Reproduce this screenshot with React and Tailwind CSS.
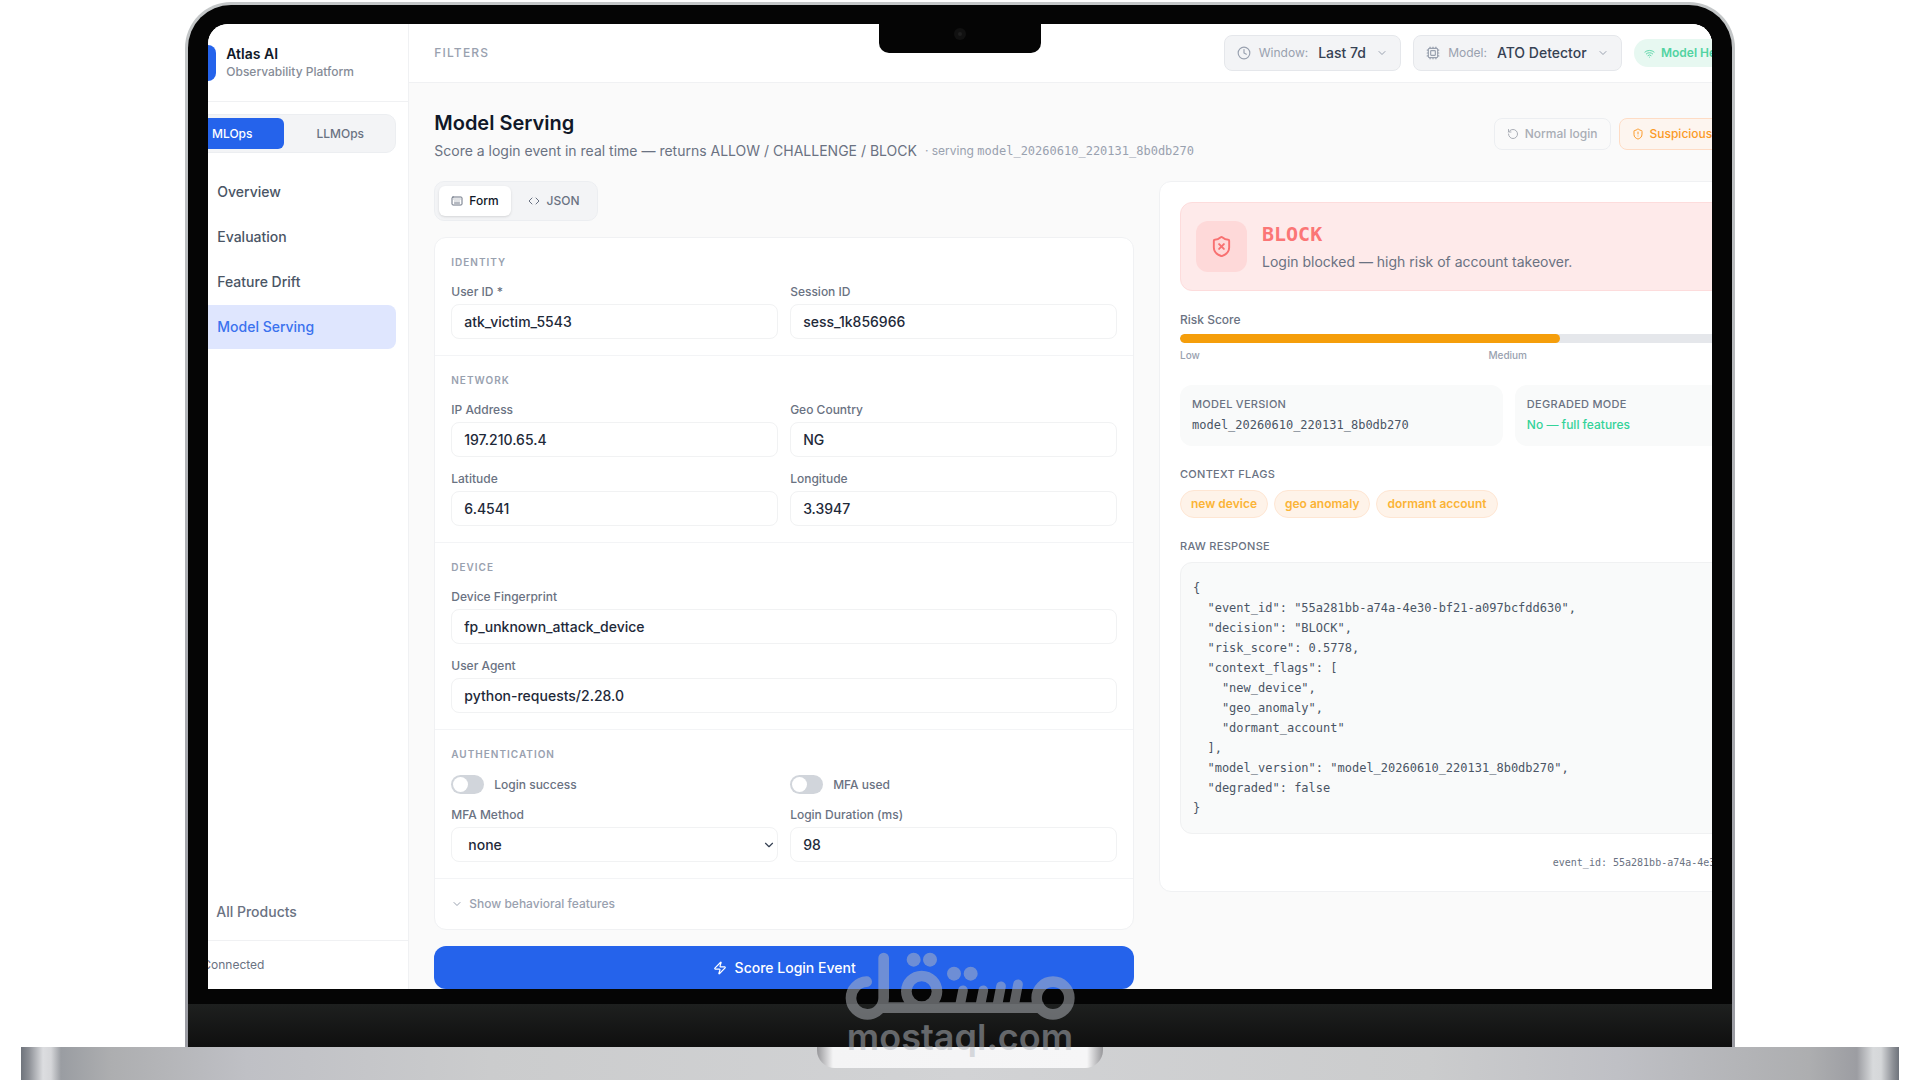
import { useState } from 'react';
import {
  ChevronDown,
  CircuitBoard,
  Clock,
  Code,
  Cpu,
  Gauge,
  Grid2x2,
  Keyboard,
  LayoutDashboard,
  LineChart,
  RotateCcw,
  Server,
  ShieldAlert,
  ShieldX,
  Wifi,
  Zap,
} from 'lucide-react';

const navItems = [
  { label: 'Overview', Icon: LayoutDashboard },
  { label: 'Evaluation', Icon: Gauge },
  { label: 'Feature Drift', Icon: LineChart },
  { label: 'Model Serving', Icon: Server, active: true },
];

const rawResponse = {
  event_id: '55a281bb-a74a-4e30-bf21-a097bcfdd630',
  decision: 'BLOCK',
  risk_score: 0.5778,
  context_flags: ['new_device', 'geo_anomaly', 'dormant_account'],
  model_version: 'model_20260610_220131_8b0db270',
  degraded: false,
};

const mono = "font-['DejaVu_Sans_Mono',monospace]";

function Sidebar() {
  return (
    <aside className="flex w-[245px] shrink-0 flex-col border-r border-[#f0f1f3] bg-white">
      <div className="flex h-[78px] items-center gap-[10px] border-b border-[#f0f1f3] px-4">
        <div className="flex size-9 items-center justify-center rounded-lg bg-[#2563eb] text-white">
          <CircuitBoard size={18} />
        </div>
        <div>
          <div className="text-sm font-semibold leading-[18px] text-gray-900">Atlas AI</div>
          <div className="text-xs font-medium leading-[18px] text-[#868c97]">Observability Platform</div>
        </div>
      </div>
      <div className="mx-3 mt-3 grid grid-cols-2 gap-1 rounded-[10px] border border-[#eceef1] bg-[#f3f4f6] p-[3px]">
        <button type="button" className="h-[31px] rounded-md bg-[#2563eb] text-xs font-medium text-white">
          MLOps
        </button>
        <button type="button" className="h-[31px] rounded-md text-xs font-medium text-gray-500">
          LLMOps
        </button>
      </div>
      <nav className="mx-3 mt-[17px] flex flex-col gap-px">
        {navItems.map(({ label, Icon, active }) => (
          <a
            key={label}
            href="#"
            className={
              active
                ? 'flex h-11 items-center gap-3 rounded-lg bg-[#dfe6fe] px-3 text-sm font-medium text-[#3b72ee]'
                : 'flex h-11 items-center gap-3 rounded-lg px-3 text-sm font-medium text-gray-600'
            }
          >
            <Icon size={17} />
            {label}
          </a>
        ))}
      </nav>
      <a href="#" className="mx-3 mt-auto mb-1.5 flex h-11 items-center gap-3 px-3 text-sm font-medium text-gray-500">
        <Grid2x2 size={16} />
        All Products
      </a>
      <div className="flex h-[49px] items-center gap-[10px] border-t border-[#f0f1f3] px-5 text-xs text-gray-500">
        <span className="size-2 rounded-full bg-emerald-500" />
        Connected
      </div>
    </aside>
  );
}

function FilterSelect({ id, label, value, Icon }) {
  return (
    <div className="flex h-9 items-center rounded-lg border border-[#e5e7eb] bg-[#f3f4f6] px-3">
      <Icon size={14} className="mr-2 text-gray-400" />
      <label htmlFor={id} className="mr-[10px] text-xs text-gray-400">
        {label}
      </label>
      <select id={id} className="appearance-none bg-transparent text-sm font-medium text-gray-700">
        <option>{value}</option>
      </select>
      <ChevronDown size={12} className="ml-2.5 text-gray-400" />
    </div>
  );
}

function TopBar() {
  return (
    <header className="flex h-[59px] shrink-0 items-center justify-between border-b border-[#f0f1f3] bg-white pr-6 pl-[25px]">
      <span className="text-xs font-medium tracking-widest text-gray-400">FILTERS</span>
      <div className="flex w-[635px] items-center gap-3">
        <FilterSelect id="window" label="Window:" value="Last 7d" Icon={Clock} />
        <FilterSelect id="model" label="Model:" value="ATO Detector" Icon={Cpu} />
        <span className="flex h-7 items-center gap-1.5 rounded-full bg-[#e7f8f1] px-[10px] text-xs font-semibold text-[#52d3a2]">
          <Wifi size={11} />
          Model Healthy
        </span>
      </div>
    </header>
  );
}

function Field({ id, label, value, full }) {
  return (
    <div className={full ? 'col-span-2' : ''}>
      <label htmlFor={id} className="mb-1 block text-xs font-medium leading-4 text-gray-500">
        {label}
      </label>
      <input
        id={id}
        defaultValue={value}
        className="block h-[35px] w-full rounded-lg border border-[#f1f2f3] bg-white px-3 text-sm font-medium text-gray-800 outline-none"
      />
    </div>
  );
}

function Toggle({ id, label }) {
  const [on, setOn] = useState(false);
  return (
    <label htmlFor={id} className="flex h-[17px] items-center gap-[10px] text-xs font-medium text-gray-500">
      <input id={id} type="checkbox" role="switch" checked={on} onChange={() => setOn(!on)} className="peer sr-only" />
      <span className="flex h-[19px] w-[33px] items-center rounded-full bg-[#d1d5db] px-0.5 peer-checked:justify-end peer-checked:bg-[#2563eb]">
        <span className="size-[15px] rounded-full bg-white" />
      </span>
      {label}
    </label>
  );
}

function Section({ title, children }) {
  return (
    <fieldset className="border-b border-[#f3f4f6] p-4">
      <legend className="float-left mb-3.5 text-[10px] font-semibold leading-4 tracking-widest text-gray-400">
        {title}
      </legend>
      <div className="clear-both grid grid-cols-2 gap-x-3 gap-y-3.5">{children}</div>
    </fieldset>
  );
}

function EventForm() {
  return (
    <div className="flex flex-col">
      <div className="mb-4 flex h-10 gap-1 self-start rounded-[10px] border border-[#eceef1] bg-[#f3f4f6] p-1 text-xs font-medium">
        <button type="button" className="flex items-center gap-1.5 rounded-md bg-white px-3 text-gray-900 shadow-sm">
          <Keyboard size={12} className="text-gray-500" />
          Form
        </button>
        <button type="button" className="flex items-center gap-[7px] rounded-md px-[13px] text-gray-500">
          <Code size={12} />
          JSON
        </button>
      </div>
      <form onSubmit={(e) => e.preventDefault()}>
        <div className="rounded-xl border border-[#f0f1f3] bg-white">
          <Section title="IDENTITY">
            <Field id="user" label="User ID *" value="atk_victim_5543" />
            <Field id="session" label="Session ID" value="sess_1k856966" />
          </Section>
          <Section title="NETWORK">
            <Field id="ip" label="IP Address" value="197.210.65.4" />
            <Field id="geo" label="Geo Country" value="NG" />
            <Field id="lat" label="Latitude" value="6.4541" />
            <Field id="lng" label="Longitude" value="3.3947" />
          </Section>
          <Section title="DEVICE">
            <Field id="fingerprint" label="Device Fingerprint" value="fp_unknown_attack_device" full />
            <Field id="agent" label="User Agent" value="python-requests/2.28.0" full />
          </Section>
          <Section title="AUTHENTICATION">
            <Toggle id="login-success" label="Login success" />
            <Toggle id="mfa-used" label="MFA used" />
            <div>
              <label htmlFor="mfa" className="mb-1 block text-xs font-medium leading-4 text-gray-500">
                MFA Method
              </label>
              <div className="grid">
                <select
                  id="mfa"
                  className="col-start-1 row-start-1 h-[35px] w-full appearance-none rounded-lg border border-[#f1f2f3] bg-white px-4 text-sm font-medium text-gray-800"
                >
                  <option>none</option>
                </select>
                <ChevronDown
                  size={14}
                  className="pointer-events-none col-start-1 row-start-1 mr-0.5 self-center justify-self-end text-gray-700"
                />
              </div>
            </div>
            <Field id="duration" label="Login Duration (ms)" value="98" />
          </Section>
          <button type="button" className="mx-4 my-[17px] flex h-4 items-center gap-1.5 text-xs font-medium text-gray-400">
            <ChevronDown size={12} />
            Show behavioral features
          </button>
        </div>
        <button
          type="submit"
          className="mt-4 flex h-[43px] w-full items-center justify-center gap-2 rounded-xl bg-[#2563eb] text-sm font-medium text-white"
        >
          <Zap size={14} />
          Score Login Event
        </button>
      </form>
    </div>
  );
}

function SmallHeading({ children }) {
  return <h3 className="text-[11px] font-medium leading-[15px] tracking-wide text-gray-500">{children}</h3>;
}

function ResultPanel() {
  return (
    <section className="flex flex-col gap-[21px] self-start rounded-xl border border-[#f0f1f3] bg-white p-5">
      <div className="flex h-[89px] items-center gap-[15px] rounded-xl border border-[#fddcdc] bg-[#feeaea] px-[15px]">
        <div className="flex size-[51px] items-center justify-center rounded-xl bg-[#fed9d9] text-[#f87171]">
          <ShieldX size={23} />
        </div>
        <div className="pt-0.5">
          <div className={`${mono} text-xl font-bold leading-7 text-[#fb7676]`}>BLOCK</div>
          <div className="text-sm leading-7 text-gray-500">Login blocked — high risk of account takeover.</div>
        </div>
      </div>

      <div>
        <div className="mb-1.5 text-xs font-medium leading-4 text-gray-500">Risk Score</div>
        <div className="h-[9px] overflow-hidden rounded-full bg-[#e5e7eb]">
          <div className="h-full rounded-full bg-[#f59e0b]" style={{ width: `${rawResponse.risk_score * 100}%` }} />
        </div>
        <div className="mt-1 flex justify-between text-[10px] font-medium leading-[17px] text-gray-400">
          <span>Low</span>
          <span>Medium</span>
          <span>High</span>
        </div>
      </div>

      <div className="grid grid-cols-2 gap-3">
        <div className="flex h-[61px] flex-col justify-center gap-1 rounded-xl bg-[#f9fafa] px-3">
          <SmallHeading>MODEL VERSION</SmallHeading>
          <div className={`${mono} text-xs leading-[18px] text-gray-600`}>{rawResponse.model_version}</div>
        </div>
        <div className="flex h-[61px] flex-col justify-center gap-1 rounded-xl bg-[#f9fafa] px-3">
          <SmallHeading>DEGRADED MODE</SmallHeading>
          <div className="text-xs font-medium leading-[18px] text-[#34d399]">No — full features</div>
        </div>
      </div>

      <div>
        <SmallHeading>CONTEXT FLAGS</SmallHeading>
        <div className="mt-2 flex gap-1.5">
          {['new device', 'geo anomaly', 'dormant account'].map((flag) => (
            <span
              key={flag}
              className="flex h-7 items-center rounded-full border border-[#fee6d3] bg-[#fef3e9] px-[10px] text-xs font-semibold text-[#fbb436]"
            >
              {flag}
            </span>
          ))}
        </div>
      </div>

      <div>
        <SmallHeading>RAW RESPONSE</SmallHeading>
        <pre
          className={`${mono} mt-2 rounded-xl border border-[#f0f1f2] bg-[#f9fafa] px-3 py-[15px] text-xs leading-5 text-gray-600`}
        >
          {JSON.stringify(rawResponse, null, 2)}
        </pre>
      </div>

      <div className={`${mono} pr-2 text-right text-[10px] leading-4 text-gray-500`}>
        event_id: {rawResponse.event_id}
      </div>
    </section>
  );
}

function Dashboard() {
  return (
    <div className="-mr-[171px] -ml-11 flex h-full">
      <Sidebar />
      <div className="flex min-w-0 flex-1 flex-col bg-[#fafafa]">
        <TopBar />
        <main className="pt-6 pr-6 pl-[25px]">
          <div className="mb-[23px] flex h-[51px] justify-between">
            <div>
              <h1 className="text-xl font-semibold leading-8 text-gray-900">Model Serving</h1>
              <p className="flex items-center gap-2 text-sm leading-6 text-gray-500">
                Score a login event in real time — returns ALLOW / CHALLENGE / BLOCK
                <span className="text-xs text-gray-400">
                  · serving <span className={mono}>{rawResponse.model_version}</span>
                </span>
              </p>
            </div>
            <div className="mt-[11px] flex w-[365px] gap-2 text-xs font-medium">
              <button
                type="button"
                className="flex h-8 items-center gap-1.5 rounded-lg border border-[#eceef1] px-3 text-[#a9adb5]"
              >
                <RotateCcw size={12} />
                Normal login
              </button>
              <button
                type="button"
                className="flex h-8 items-center gap-1.5 rounded-lg border border-[#fedcc5] bg-[#fdf5ef] px-3 text-[#fb9a28]"
              >
                <ShieldAlert size={12} />
                Suspicious login
              </button>
            </div>
          </div>
          <div className="grid grid-cols-2 gap-[25px]">
            <EventForm />
            <ResultPanel />
          </div>
        </main>
      </div>
    </div>
  );
}

function Watermark() {
  return (
    <div className="pointer-events-none absolute inset-x-0 bottom-[22px] flex flex-col items-center opacity-50">
      <svg
        className="-mb-1"
        width="230"
        height="69"
        viewBox="195 95 690 207"
        fill="none"
        stroke="#b6bac1"
        strokeWidth="32"
        strokeLinecap="round"
        role="img"
        aria-label="Mostaql"
      >
        <g stroke="none" fill="#b6bac1">
          <circle cx="401" cy="118" r="21" />
          <circle cx="450" cy="118" r="21" />
          <circle cx="522" cy="160" r="21" />
          <circle cx="572" cy="160" r="21" />
        </g>
        <path d="M260 184A49 49 0 1 0 311 233V113" />
        <path d="M300 262H790" strokeLinecap="butt" />
        <circle cx="425" cy="213" r="46" />
        <circle cx="819" cy="233" r="49" />
        <path d="M549 210L541 250M610 210L602 250M663 198L653 250M714 192L703 250" strokeWidth="29" />
      </svg>
      <span className="font-['Inter',sans-serif] text-4xl font-semibold leading-[41px] text-[#b6bac1]">
        mostaql.com
      </span>
    </div>
  );
}

export default function App() {
  return (
    <div className="relative flex h-screen flex-col overflow-hidden bg-white pt-0.5 font-['Inter',sans-serif]">
      <div className="mx-[9.65%] flex min-h-0 flex-1 flex-col rounded-t-[46px] bg-gradient-to-b from-[#c4c7c8] to-[#9b9ca3] px-[3px] pt-[3px]">
        <div className="flex min-h-0 flex-1 flex-col overflow-hidden rounded-t-[43px] bg-[#050505]">
          <div className="relative mx-5 mt-[19px] min-h-0 flex-1 overflow-hidden rounded-t-[20px] bg-white">
            <Dashboard />
            <div className="absolute top-0 left-1/2 flex h-[29px] w-[162px] -translate-x-1/2 justify-center rounded-b-[10px] bg-[#050505] pt-1">
              <span className="flex size-3 items-center justify-center rounded-full bg-[#111111]">
                <span className="size-1 rounded-full bg-[#1f1f1f]" />
              </span>
            </div>
          </div>
          <div className="mt-[15px] h-[43px] shrink-0 bg-gradient-to-b from-[#1e201f] to-[#0f0f0f]" />
        </div>
      </div>
      <div className="mx-[21px] flex h-[33px] shrink-0 justify-center bg-[linear-gradient(90deg,#6f747c_0,#8d9096_8px,#dcdde0_22px,#d5d6d9_30px,#9a9da2_40px,#adaeb0_90px,#bfc0c5_12%,#cbcccd_25%,#d2d3d5_50%,#cbcccd_75%,#bfc0c5_85%,#adaeb0_calc(100%-90px),#9c9da2_calc(100%-42px),#d8dadc_calc(100%-26px),#d5d7d9_calc(100%-18px),#8d9096_calc(100%-6px),#6f747c_100%)]">
        <div className="h-[21px] w-[286px] rounded-b-[18px] bg-[linear-gradient(90deg,#97979a,#f4f4f5_16px,#f6f6f7_calc(100%-16px),#97979a)]" />
      </div>
      <Watermark />
    </div>
  );
}
